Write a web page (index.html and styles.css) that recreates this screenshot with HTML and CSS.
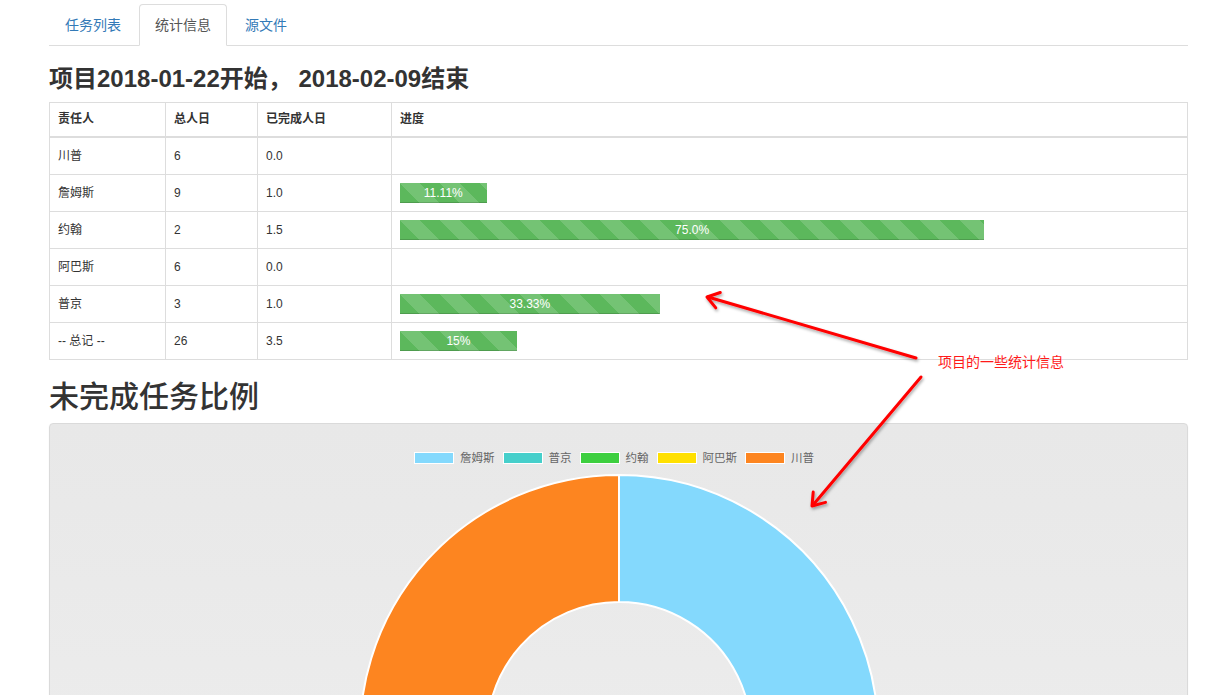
FILE: index.html
```html
<!DOCTYPE html>
<html lang="zh">
<head>
<meta charset="utf-8">
<title>统计信息</title>
<link rel="stylesheet" href="styles.css">
</head>
<body>
<div class="page">
  <ul class="nav-tabs">
    <li class="tab"><a href="#">任务列表</a></li>
    <li class="tab active"><a href="#">统计信息</a></li>
    <li class="tab"><a href="#">源文件</a></li>
  </ul>

  <h3 class="title">项目2018-01-22开始， 2018-02-09结束</h3>

  <table class="stats">
    <colgroup>
      <col class="c1"><col class="c2"><col class="c3"><col class="c4">
    </colgroup>
    <thead>
      <tr><th>责任人</th><th>总人日</th><th>已完成人日</th><th>进度</th></tr>
    </thead>
    <tbody>
      <tr><td>川普</td><td>6</td><td>0.0</td><td></td></tr>
      <tr><td>詹姆斯</td><td>9</td><td>1.0</td><td><div class="bar" style="width:11.11%">11.11%</div></td></tr>
      <tr><td>约翰</td><td>2</td><td>1.5</td><td><div class="bar" style="width:75%">75.0%</div></td></tr>
      <tr><td>阿巴斯</td><td>6</td><td>0.0</td><td></td></tr>
      <tr><td>普京</td><td>3</td><td>1.0</td><td><div class="bar" style="width:33.33%">33.33%</div></td></tr>
      <tr><td>-- 总记 --</td><td>26</td><td>3.5</td><td><div class="bar" style="width:15%">15%</div></td></tr>
    </tbody>
  </table>

  <h2 class="subtitle">未完成任务比例</h2>

  <div class="chart-panel">
    <div class="legend">
      <div class="legend-item"><span class="swatch sw-blue"></span><span>詹姆斯</span></div>
      <div class="legend-item"><span class="swatch sw-teal"></span><span>普京</span></div>
      <div class="legend-item"><span class="swatch sw-green"></span><span>约翰</span></div>
      <div class="legend-item"><span class="swatch sw-yellow"></span><span>阿巴斯</span></div>
      <div class="legend-item"><span class="swatch sw-orange"></span><span>川普</span></div>
    </div>
    <svg class="doughnut" width="1137" height="300" viewBox="0 0 1137 300">
      <g stroke="#ffffff" stroke-width="2" stroke-linejoin="round">
        <path fill="#84d9fd" d="M569,12 A259,259 0 0 1 773.1,430.5 L673.0,352.3 A132,132 0 0 0 569,139 Z"/>
        <path fill="#46cfcb" d="M773.1,430.5 A259,259 0 0 1 657.6,514.4 L614.1,395.0 A132,132 0 0 0 673.0,352.3 Z"/>
        <path fill="#3dcf3f" d="M657.6,514.4 A259,259 0 0 1 622.8,524.3 L596.4,400.1 A132,132 0 0 0 614.1,395.0 Z"/>
        <path fill="#ffe000" d="M622.8,524.3 A259,259 0 0 1 311.4,298.1 L437.7,284.8 A132,132 0 0 0 596.4,400.1 Z"/>
        <path fill="#fd8520" d="M311.4,298.1 A259,259 0 0 1 569,12 L569,139 A132,132 0 0 0 437.7,284.8 Z"/>
      </g>
    </svg>
  </div>
</div>

<div class="annotation">
  <svg class="arrows" width="1222" height="695" viewBox="0 0 1222 695">
    <defs>
      <filter id="shadow" x="-20%" y="-20%" width="140%" height="140%">
        <feDropShadow dx="1" dy="2" stdDeviation="1.5" flood-color="#000" flood-opacity="0.35"/>
      </filter>
    </defs>
    <g stroke="#ff0000" stroke-width="3" fill="none" stroke-linecap="round" stroke-linejoin="round" filter="url(#shadow)">
      <path d="M916,358 L708,297"/>
      <path d="M720.3,292.5 L707,297 L715.8,307.9"/>
      <path d="M921,377 L813,505"/>
      <path d="M813.2,492.1 L812,506 L825.5,502.4"/>
    </g>
  </svg>
  <div class="note">项目的一些统计信息</div>
</div>
</body>
</html>
```

FILE: styles.css
```css
html, body {
  margin: 0;
  padding: 0;
  background: #ffffff;
}

body {
  font-family: "Liberation Sans", "Noto Sans CJK SC", sans-serif;
  font-size: 14px;
  color: #333333;
  line-height: 1.42857;
  position: relative;
  overflow: hidden;
  height: 695px;
}

.page {
  width: 1139px;
  margin-left: 49px;
  padding-top: 4px;
}

/* tabs */
.nav-tabs {
  display: flex;
  list-style: none;
  margin: 0;
  padding: 0;
  border-bottom: 1px solid #dddddd;
}

.tab {
  margin-bottom: -1px;
  margin-right: 2px;
}

.tab a {
  display: block;
  padding: 10px 15px;
  line-height: 20px;
  border: 1px solid transparent;
  border-radius: 4px 4px 0 0;
  color: #337ab7;
  text-decoration: none;
}

.tab.active a {
  color: #555555;
  background: #ffffff;
  border-color: #dddddd;
  border-bottom-color: transparent;
}

/* headings */
.title {
  margin: 20px 0 10px;
  font-size: 24px;
  font-weight: 600;
  line-height: 1.1;
  color: #333333;
}

.subtitle {
  margin: 20px 0 10px;
  font-size: 30px;
  font-weight: 500;
  line-height: 1.1;
  color: #333333;
}

/* table */
.stats {
  width: 100%;
  border-collapse: collapse;
  border: 1px solid #dddddd;
  font-size: 12px;
  margin-bottom: 20px;
  table-layout: fixed;
}

.c1 { width: 116px; }
.c2 { width: 92px; }
.c3 { width: 134px; }

.stats th,
.stats td {
  padding: 8px;
  border: 1px solid #dddddd;
  text-align: left;
  vertical-align: top;
  color: #333333;
}

.stats th {
  line-height: 17px;
  font-weight: bold;
  border-bottom: 2px solid #dddddd;
}

.stats td {
  line-height: 20px;
}

.bar {
  height: 20px;
  line-height: 20px;
  font-size: 12px;
  color: #ffffff;
  text-align: center;
  white-space: nowrap;
  background-color: #5cb85c;
  background-image: linear-gradient(45deg,
    rgba(255,255,255,.15) 25%, transparent 25%,
    transparent 50%, rgba(255,255,255,.15) 50%,
    rgba(255,255,255,.15) 75%, transparent 75%, transparent);
  background-size: 40px 40px;
  box-shadow: inset 0 -1px 0 rgba(0,0,0,.15);
}

/* chart */
.chart-panel {
  height: 320px;
  border: 1px solid #dadada;
  border-radius: 4px;
  background: linear-gradient(#e8e8e8, #ececec);
  box-shadow: 0 1px 2px rgba(0,0,0,.06);
}

.legend {
  display: flex;
  justify-content: center;
  gap: 8px;
  padding-top: 28px;
  padding-right: 9px;
  height: 12px;
  font-size: 11.5px;
  line-height: 12px;
  color: #666666;
}

.legend-item {
  display: flex;
  align-items: center;
  gap: 6px;
}

.swatch {
  display: block;
  width: 38px;
  height: 10px;
  border: 1px solid #ffffff;
}

.sw-blue { background: #84d9fd; }
.sw-teal { background: #46cfcb; }
.sw-green { background: #3dcf3f; }
.sw-yellow { background: #ffe000; }
.sw-orange { background: #fd8520; }

.doughnut {
  display: block;
  margin-top: -1px;
}

/* annotation overlay */
.annotation {
  position: absolute;
  left: 0;
  top: 0;
  width: 1222px;
  height: 695px;
  pointer-events: none;
}

.arrows {
  display: block;
}

.note {
  position: absolute;
  left: 938px;
  top: 352px;
  font-size: 14px;
  line-height: 20px;
  color: #ff1a1a;
}
```
